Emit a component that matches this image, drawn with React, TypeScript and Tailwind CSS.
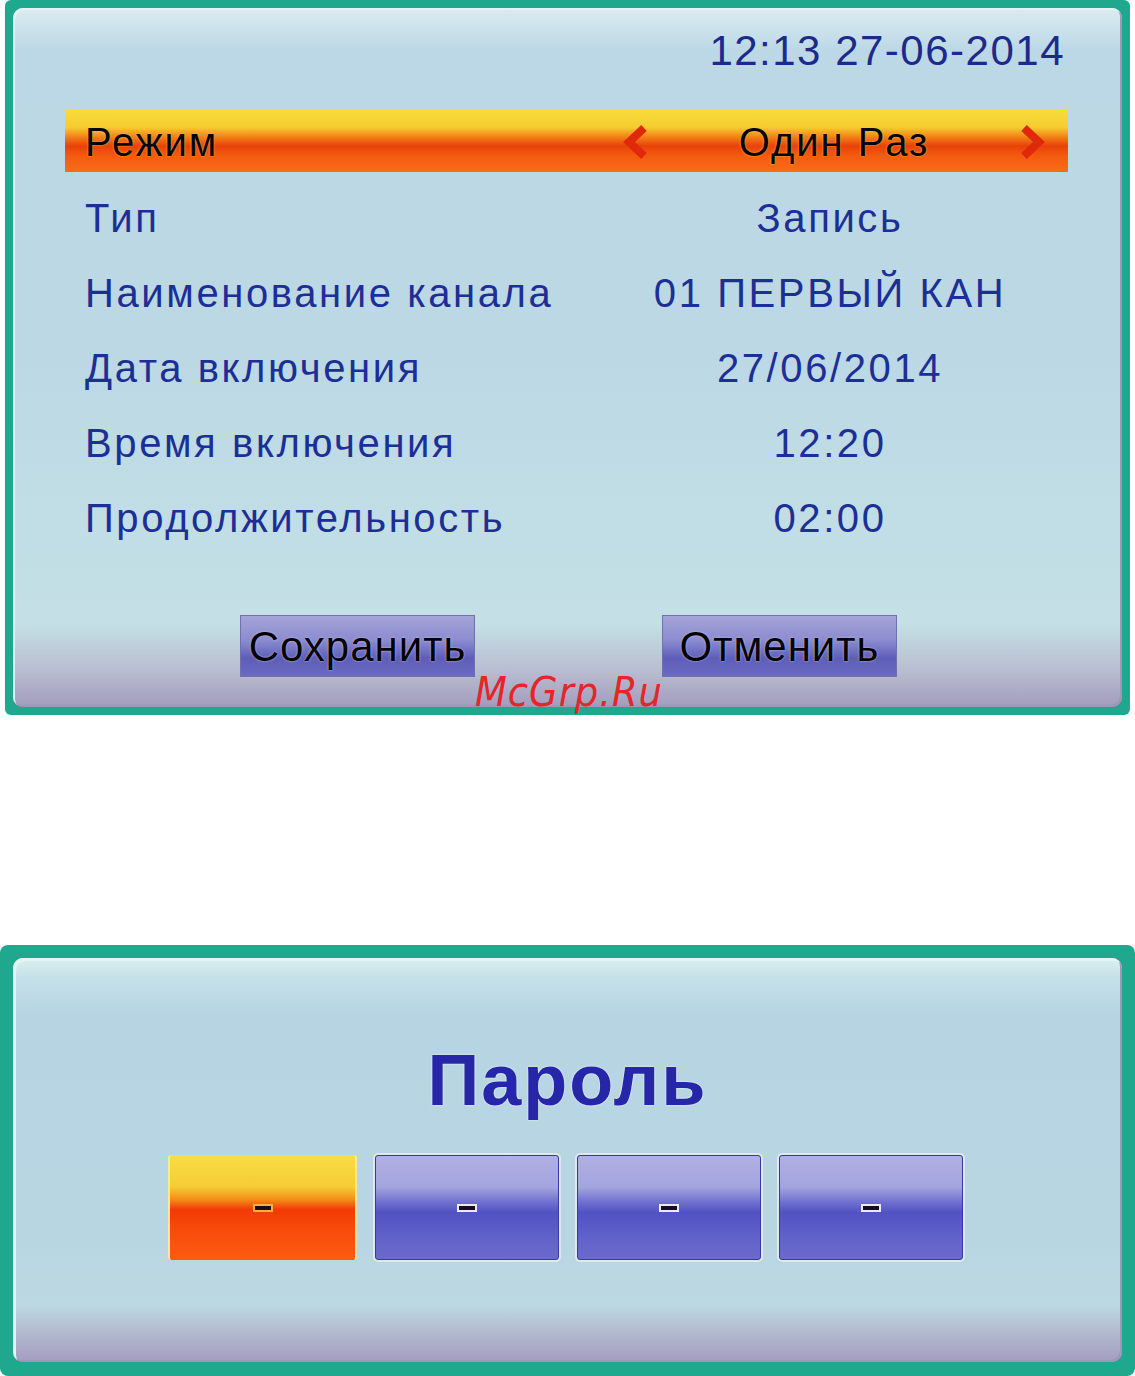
import React from "react";

const rows = [
  { label: "Тип", value: "Запись" },
  { label: "Наименование канала", value: "01 ПЕРВЫЙ КАН" },
  { label: "Дата включения", value: "27/06/2014" },
  { label: "Время включения", value: "12:20" },
  { label: "Продолжительность", value: "02:00" },
];

const Chevron = ({ dir }: { dir: "left" | "right" }) => (
  <svg width="30" height="34" viewBox="0 0 30 34" className="shrink-0">
    <polyline
      points={dir === "left" ? "24,3 9,17 24,31" : "6,3 21,17 6,31"}
      fill="none"
      stroke="#e0280a"
      strokeWidth="8"
      strokeLinejoin="miter"
    />
  </svg>
);

const Dash = ({ light }: { light?: boolean }) => (
  <div
    className={`w-[20px] h-[8px] bg-[#1a0a20] border-2 ${
      light ? "border-[#e8e8ff]" : "border-[#ffb040]"
    }`}
  />
);

const TimerPanel = () => (
  <div className="relative ml-[5px] w-[1125px] h-[715px] bg-[#1fa88e] p-[8px] rounded-[6px]">
    <div className="h-full rounded-[10px] bg-[linear-gradient(180deg,#dcecf0_0%,#bcd8e6_6%,#bcd8e4_50%,#c4e0e6_88%,#b8bcd0_95%,#a29cbc_100%)] shadow-[inset_2px_2px_0_#e4f2f4,inset_-2px_-2px_0_#9c98b8] pt-[12px] font-['Liberation_Sans',Arial,sans-serif]">
      {/* clock */}
      <div className="h-[60px] flex items-center justify-end pr-[57px] text-[42px] tracking-[1.5px] text-[#1c2a8c]">
        12:13 27-06-2014
      </div>

      {/* selected row */}
      <div className="mt-[30px] ml-[52px] w-[1003px] h-[62px] flex items-center bg-[linear-gradient(180deg,#f8dc3c_0%,#f6cc30_28%,#f27a14_45%,#e8420a_58%,#f45c10_75%,#fa6c18_100%)] text-black">
        <div className="w-[535px] pl-[20px] pt-[2px] text-[40px] tracking-[2px] [text-shadow:0_0_2px_#f8c040]">
          Режим
        </div>
        <div className="flex-1 flex items-center justify-between px-[20px] pt-[2px]">
          <Chevron dir="left" />
          <span className="text-[40px] tracking-[2px] [text-shadow:0_0_2px_#f8c040]">Один Раз</span>
          <Chevron dir="right" />
        </div>
      </div>

      {/* options */}
      <div className="mt-[8px] ml-[52px] w-[1003px]">
        {rows.map((r) => (
          <div key={r.label} className="h-[75px] flex items-center text-[40px] tracking-[2.6px] text-[#1c2f96]">
            <div className="w-[535px] pl-[20px]">{r.label}</div>
            <div className="w-[460px] text-center">{r.value}</div>
          </div>
        ))}
      </div>

      {/* buttons */}
      <div className="mt-[60px] flex pl-[227px] gap-[187px]">
        {["Сохранить", "Отменить"].map((b) => (
          <div
            key={b}
            className="w-[235px] h-[62px] flex items-center justify-center bg-[linear-gradient(180deg,#a4a4d8_0%,#8c8cd0_40%,#5e5eba_70%,#6a6ac2_100%)] border border-[#7070b0] text-[42px] text-black tracking-[1px] [text-shadow:0_0_2px_#c8c8f0]"
          >
            {b}
          </div>
        ))}
      </div>
    </div>

    {/* watermark */}
    <div className="absolute left-[470px] top-[662px] text-[41px] italic text-[#e3262a] font-['DejaVu_Sans_Condensed','DejaVu_Sans',sans-serif] tracking-[1px]">
      McGrp.Ru
    </div>
  </div>
);

const PasswordPanel = () => (
  <div className="w-[1135px] h-[431px] bg-[#1fa88e] p-[13px] pb-[14px] rounded-[8px]">
    <div className="h-full rounded-[10px] bg-[linear-gradient(180deg,#dcf0f0_0%,#c4e0e8_5%,#b6d4e2_14%,#b8d6e2_70%,#bcd8e2_86%,#b0b4cc_94%,#a49cc0_100%)] shadow-[inset_3px_3px_0_#e4f4f4,inset_-2px_-2px_0_#9c98b8] flex flex-col items-center font-['Liberation_Sans',Arial,sans-serif]">
      <div className="mt-[82px] h-[80px] flex items-center text-[72px] font-bold tracking-[2px] text-[#2626a8] [text-shadow:0_0_2px_#f0f8ff,0_0_1px_#ffffff]">
        Пароль
      </div>
      <div className="mt-[35px] flex gap-[18px] pr-[4px]">
        <div className="w-[189px] h-[105px] flex items-center justify-center bg-[linear-gradient(180deg,#f8dc44_0%,#f6cc36_30%,#f49018_42%,#f23a06_52%,#f84a0a_70%,#fc5c12_100%)] border-l-2 border-r-2 border-[#f8e8a0] rounded-[3px]">
          <Dash />
        </div>
        {[0, 1, 2].map((i) => (
          <div
            key={i}
            className="w-[184px] h-[105px] flex items-center justify-center bg-[linear-gradient(180deg,#b0b0e4_0%,#a4a4de_30%,#6c6cd0_46%,#5252c4_55%,#6262ca_80%,#6a6ace_100%)] border border-[#3838a0] rounded-[3px] shadow-[0_0_0_2px_#dce8f4]"
          >
            <Dash light />
          </div>
        ))}
      </div>
    </div>
  </div>
);

export default function App() {
  return (
    <div className="w-[1135px] h-[1376px] bg-white flex flex-col">
      <TimerPanel />
      <div className="h-[230px]" />
      <PasswordPanel />
    </div>
  );
}
